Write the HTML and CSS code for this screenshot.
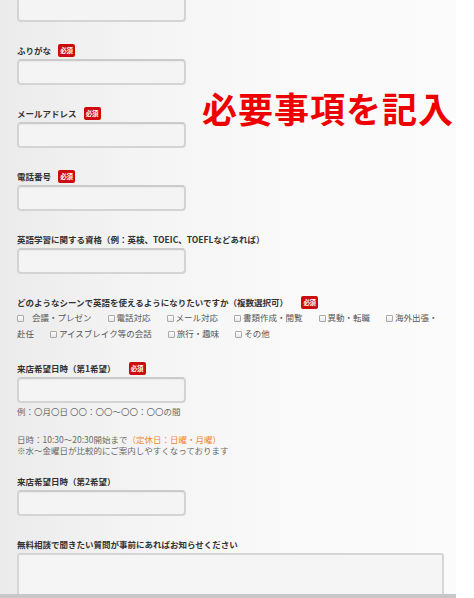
FILE: index.html
```html
<!DOCTYPE html>
<html lang="ja">
<head>
<meta charset="utf-8">
<title>お申し込みフォーム</title>
<link rel="stylesheet" href="styles.css">
</head>
<body>
<div class="page">
  <div class="field field-first">
    <input class="text" type="text">
  </div>
  <div class="field">
    <div class="label">ふりがな<span class="req">必須</span></div>
    <input class="text" type="text">
  </div>
  <div class="field">
    <div class="label">メールアドレス<span class="req">必須</span></div>
    <input class="text" type="text">
  </div>
  <div class="field">
    <div class="label">電話番号<span class="req">必須</span></div>
    <input class="text" type="text">
  </div>
  <div class="field">
    <div class="label">英語学習に関する資格（例：英検、TOEIC、TOEFLなどあれば）</div>
    <input class="text" type="text">
  </div>
  <div class="field field-opts">
    <div class="label label-tight">どのようなシーンで英語を使えるようになりたいですか（複数選択可）<span class="req req-wide">必須</span></div>
    <div class="opts"><span class="cb cb-first"></span>会議・プレゼン<span class="cb"></span>電話対応<span class="cb"></span>メール対応<span class="cb"></span>書類作成・閲覧<span class="cb"></span>異動・転職<span class="cb"></span>海外出張・<wbr>赴任<span class="cb"></span>アイスブレイク等の会話<span class="cb"></span>旅行・趣味<span class="cb"></span>その他</div>
  </div>
  <div class="field field-visit">
    <div class="label">来店希望日時（第1希望）<span class="req req-wide">必須</span></div>
    <input class="text" type="text">
    <p class="example">例：〇月〇日 〇〇：〇〇～〇〇：〇〇の間</p>
    <p class="note">日時：10:30～20:30開始まで<span class="holiday">（定休日：日曜・月曜）</span><br>※水～金曜日が比較的にご案内しやすくなっております</p>
  </div>
  <div class="field field-visit2">
    <div class="label">来店希望日時（第2希望）</div>
    <input class="text" type="text">
  </div>
  <div class="field">
    <div class="label">無料相談で聞きたい質問が事前にあればお知らせください</div>
    <textarea class="area"></textarea>
  </div>
  <div class="callout">必要事項を記入</div>
</div>
<div class="bottom-bar"></div>
</body>
</html>
```

FILE: styles.css
```css
html, body {
  margin: 0;
  padding: 0;
  background: #ffffff;
}

body {
  font-family: "Noto Sans CJK JP", "Noto Sans", sans-serif;
  width: 474px;
  height: 598px;
  overflow: hidden;
}

.page {
  position: relative;
  width: 456px;
  height: 594px;
  overflow: hidden;
  box-sizing: border-box;
  padding: 0 12px 0 17px;
  background: linear-gradient(to right, #ebebeb 0%, #f4f4f4 30%, #f9f9f9 60%, #fbfbfb 100%);
}

.bottom-bar {
  width: 456px;
  height: 4px;
  background: #c7c7c7;
}

.field {
  display: flex;
  flex-direction: column;
  align-items: flex-start;
  margin-top: 22px;
}

.field-first {
  margin-top: -4px;
}

.field-visit {
  margin-top: 21px;
}

.field-visit2 {
  margin-top: 19px;
}

.label {
  display: flex;
  align-items: center;
  gap: 7px;
  height: 13px;
  line-height: 13px;
  font-size: 8.5px;
  font-weight: 700;
  color: #333333;
  margin-bottom: 2px;
  white-space: nowrap;
}

.label-tight {
  margin-bottom: 0;
}

.req {
  display: inline-block;
  width: 17px;
  height: 13px;
  line-height: 13px;
  text-align: center;
  font-size: 6.5px;
  font-weight: 700;
  color: #ffffff;
  background: #cf0a0a;
  border-radius: 2px;
  letter-spacing: -0.3px;
}

.req-wide {
  margin-left: 6px;
}

.text {
  display: block;
  box-sizing: border-box;
  width: 169px;
  height: 26px;
  margin: 0;
  padding: 0 6px;
  border: 2px solid #d4d4d4;
  border-top-color: #cbcbcb;
  border-radius: 4px;
  background: #f4f4f4;
  box-shadow: inset 0 1px 1px rgba(0, 0, 0, 0.04);
  outline: none;
}

.area {
  display: block;
  box-sizing: border-box;
  width: 427px;
  height: 70px;
  margin: 0;
  border: 2px solid #d6d6d6;
  border-radius: 3px;
  background: #f5f5f5;
  resize: none;
  outline: none;
}

.opts {
  width: 424px;
  font-size: 8.5px;
  line-height: 16px;
  color: #555555;
}

.cb {
  display: inline-block;
  box-sizing: border-box;
  width: 7px;
  height: 7px;
  margin-left: 16px;
  margin-right: 2px;
  vertical-align: -0.5px;
  border: 1px solid #a9a9a9;
  border-radius: 1px;
  background: linear-gradient(#ffffff, #e6e6e6);
}

.cb-first {
  margin-left: 0;
  margin-right: 8px;
}

.example {
  margin: 2px 0 0;
  font-size: 8.5px;
  line-height: 12px;
  color: #6a6a6a;
}

.note {
  margin: 17px 0 0;
  font-size: 8.5px;
  line-height: 11px;
  color: #6a6a6a;
}

.holiday {
  color: #f08a2c;
}

.callout {
  position: absolute;
  left: 202px;
  top: 90px;
  font-size: 35px;
  line-height: 1;
  font-weight: 700;
  letter-spacing: 1px;
  color: #ee0000;
  white-space: nowrap;
}
```
